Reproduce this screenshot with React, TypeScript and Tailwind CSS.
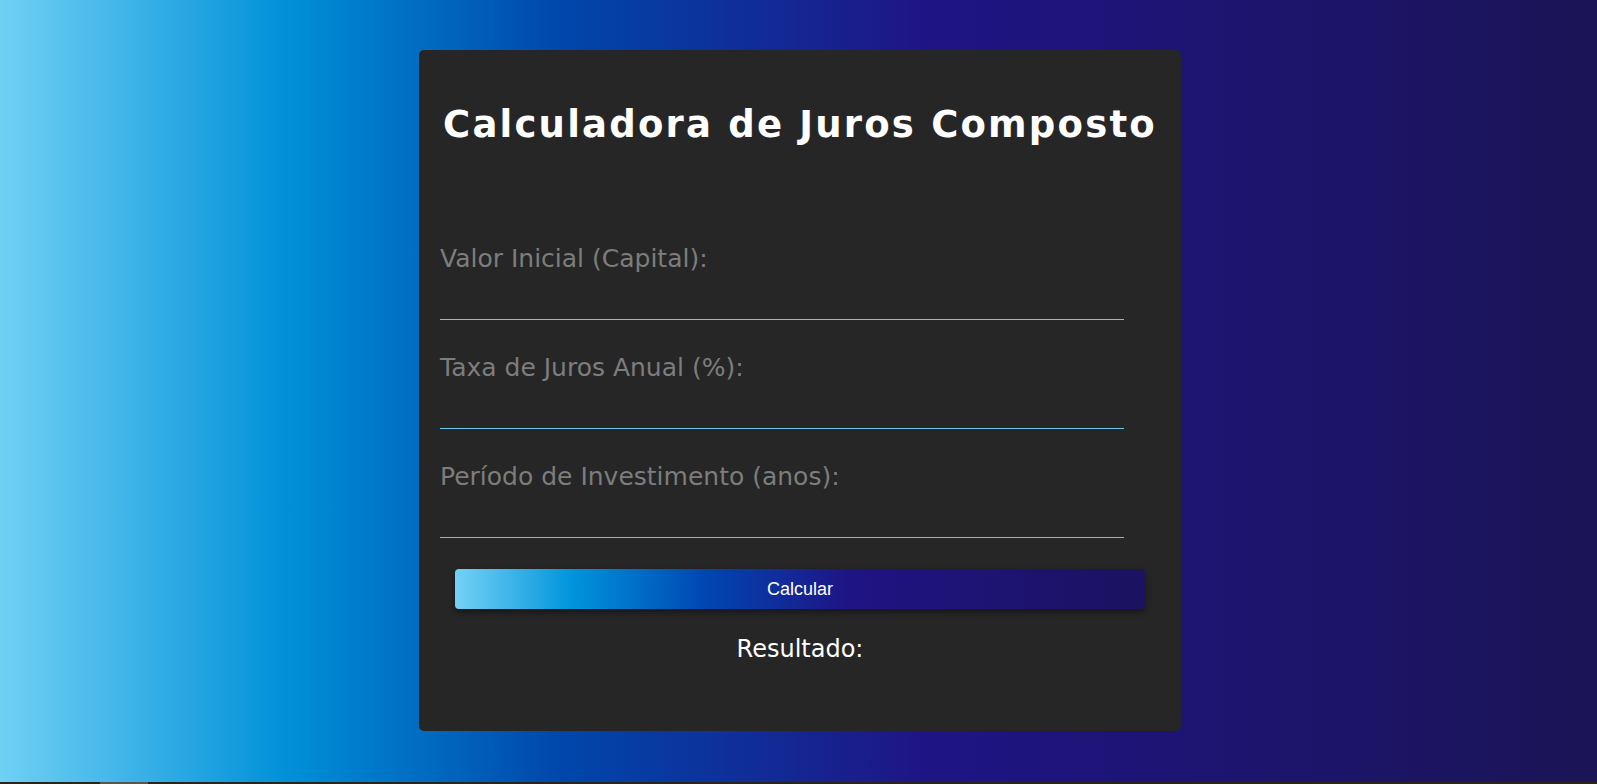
import { useState } from "react";

const fields = [
  { id: "capital", label: "Valor Inicial (Capital):" },
  { id: "taxa", label: "Taxa de Juros Anual (%):" },
  { id: "periodo", label: "Período de Investimento (anos):" },
];

export default function App() {
  const [values, setValues] = useState<Record<string, string>>({});
  const [resultado, setResultado] = useState("");

  // calculo simples: M = C * (1 + i)^t
  const calcular = () => {
    const c = parseFloat(values.capital || "0");
    const i = parseFloat(values.taxa || "0") / 100;
    const t = parseFloat(values.periodo || "0");
    if (!c || !t) return setResultado("");
    setResultado(`R$ ${(c * Math.pow(1 + i, t)).toFixed(2)}`);
  };

  return (
    <div className="flex h-[784px] w-full flex-col overflow-hidden">
      <div className="flex h-[782px] w-full justify-center bg-[linear-gradient(to_right,#70d0f4_0%,#0090d8_18%,#0047ab_35%,#1f1485_58%,#1b1456_100%)] pt-[50px]">
        <div className="ml-[3px] flex h-[681px] w-[762px] flex-col rounded-[5px] bg-[#262626] px-[21px] pt-[54px] font-['DejaVu_Sans',sans-serif]">
          <h1 className="whitespace-nowrap text-center text-[37px] font-bold leading-[42px] tracking-[2.2px] text-white">
            Calculadora de Juros Composto
          </h1>

          <div className="mt-[99px] flex flex-col gap-[34px]">
            {fields.map((f) => (
              <div key={f.id} className="flex flex-col">
                <label
                  htmlFor={f.id}
                  className="text-[25px] leading-[28px] text-[#7d7d7d]"
                >
                  {f.label}
                </label>
                <input
                  id={f.id}
                  type="number"
                  value={values[f.id] || ""}
                  onChange={(e) => setValues({ ...values, [f.id]: e.target.value })}
                  className="h-[47px] w-[684px] border-b border-[#6cc5ef] bg-transparent text-[18px] text-white outline-none"
                />
              </div>
            ))}
          </div>

          <button
            onClick={calcular}
            className="mx-auto mt-[31px] h-[40px] w-[690px] shrink-0 rounded-[4px] bg-[linear-gradient(to_right,#74d1f4_0%,#0094dc_17%,#0047b3_36%,#1f1484_57%,#1b1260_100%)] font-['Liberation_Sans',Arial,sans-serif] text-[18px] text-white shadow-[0_3px_6px_rgba(0,0,0,0.45)]"
          >
            Calcular
          </button>

          <p className="mt-[26px] text-center text-[24px] leading-[28px] text-white">
            Resultado: {resultado}
          </p>
        </div>
      </div>
      <div className="flex h-[2px] w-full bg-[#2b2419]">
        <div className="ml-[100px] h-full w-[48px] bg-[#5a5550]" />
      </div>
    </div>
  );
}
